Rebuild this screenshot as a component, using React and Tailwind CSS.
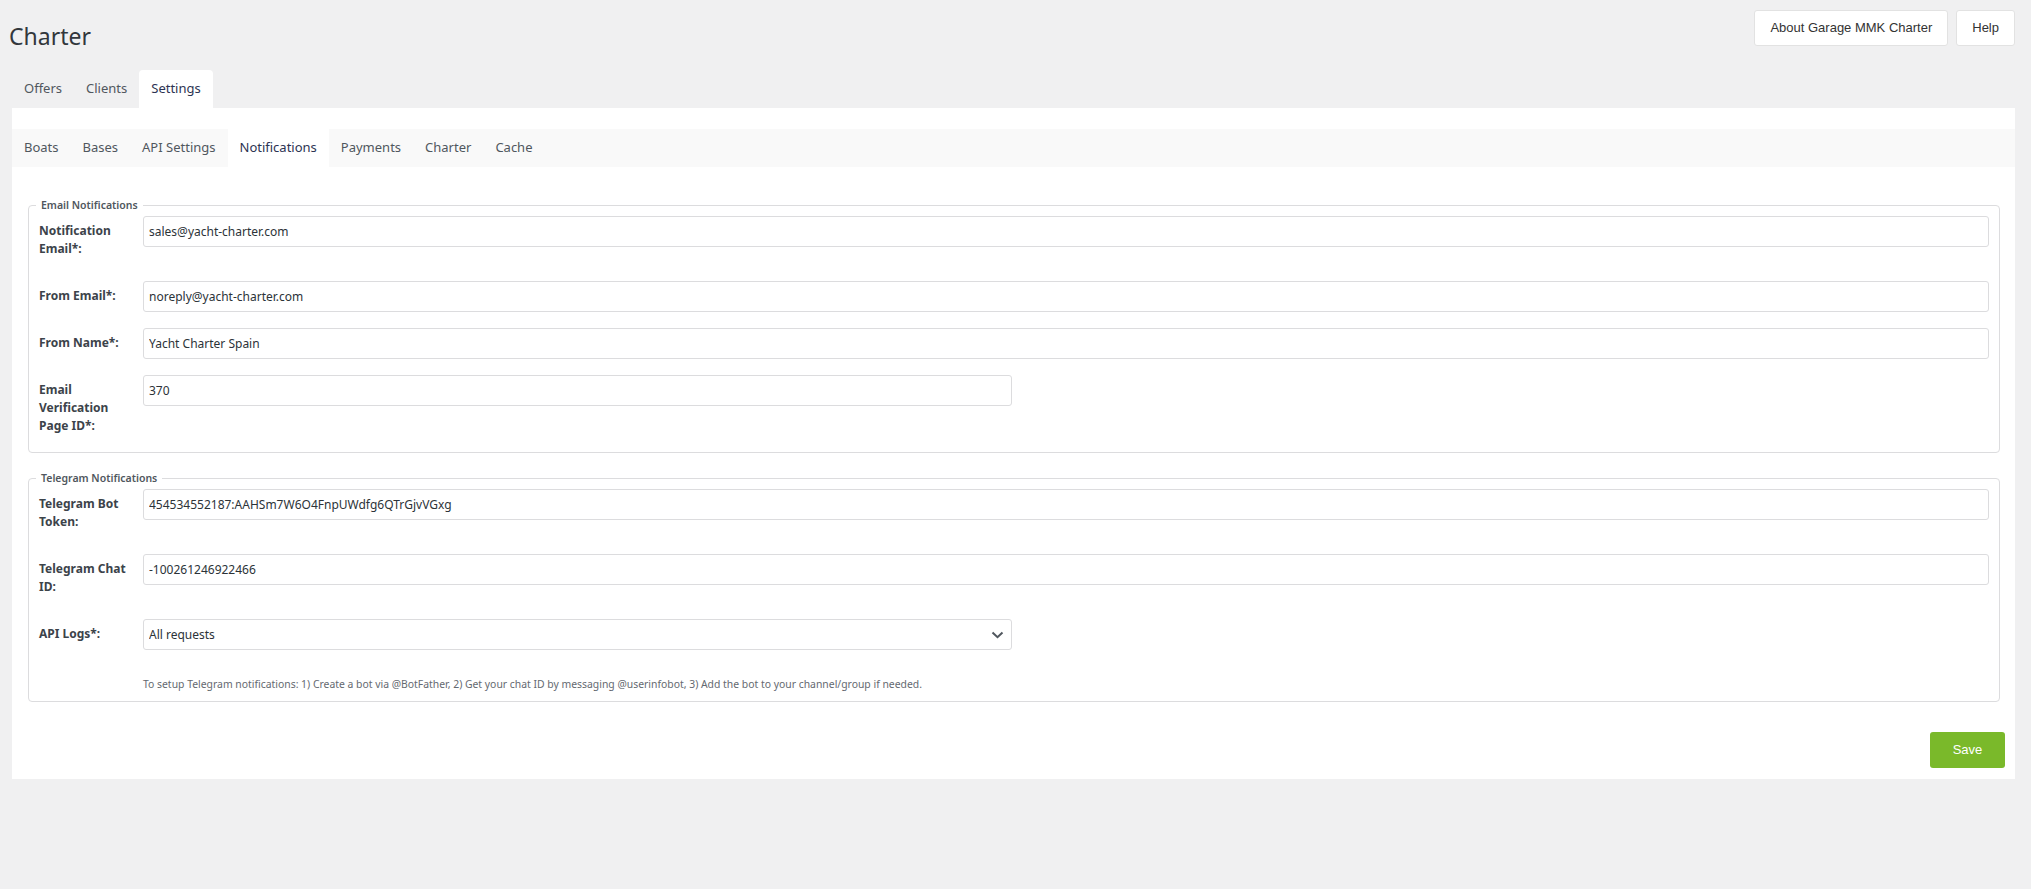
import React, { useState } from "react";

const mainTabs = ["Offers", "Clients", "Settings"];
const subTabs = ["Boats", "Bases", "API Settings", "Notifications", "Payments", "Charter", "Cache"];

const Field = ({ label, name, value, onChange, short }) => (
  <div className="flex items-start">
    <label
      htmlFor={name}
      className="w-[104px] shrink-0 pr-[8px] pt-[6px] pb-[7px] text-[12px] leading-[18px] font-bold text-[#3c434a]"
    >
      {label}
    </label>
    <input
      id={name}
      name={name}
      type="text"
      value={value}
      onChange={onChange}
      className={
        short
          ? "w-[869px] h-[31px] rounded-[3px] border border-[#dcdcde] bg-white px-[5px] text-[12px] text-[#2c3338] outline-none"
          : "flex-1 min-w-0 h-[31px] rounded-[3px] border border-[#dcdcde] bg-white px-[5px] text-[12px] text-[#2c3338] outline-none"
      }
    />
  </div>
);

const Section = ({ title, children, className }) => (
  <fieldset className={`rounded-[4px] border border-[#dcdcde] px-[7px] pb-[10px] ${className}`}>
    <legend className="px-[5px] text-[10.5px] leading-[14px] font-semibold text-[#50575e]">{title}</legend>
    <div className="flex flex-col gap-[16px] px-[3px] pt-[4px]">{children}</div>
  </fieldset>
);

const App = () => {
  const [tab, setTab] = useState("Settings");
  const [subTab, setSubTab] = useState("Notifications");
  const [form, setForm] = useState({
    notification_email: "sales@yacht-charter.com",
    from_email: "noreply@yacht-charter.com",
    from_name: "Yacht Charter Spain",
    verification_page: "370",
    bot_token: "454534552187:AAHSm7W6O4FnpUWdfg6QTrGjvVGxg",
    chat_id: "-100261246922466",
    api_logs: "all",
  });

  const handleChange = (e) => setForm({ ...form, [e.target.name]: e.target.value });

  return (
    <div className="min-h-screen bg-[#f0f0f1] pl-[12px] pr-[16px] pt-[10px] font-['Noto_Sans',sans-serif]">
      {/* header */}
      <div className="flex items-start justify-between">
        <h1 className="-ml-[3px] pt-[11px] text-[23px] leading-[30px] font-normal text-[#32373c]">Charter</h1>
        <div className="flex gap-[8px] font-['Liberation_Sans',Arial,sans-serif] text-[13px] text-[#333]">
          <button className="h-[36px] px-[15px] rounded-[3px] border border-[#e2e2e2] bg-white">About Garage MMK Charter</button>
          <button className="h-[36px] px-[15px] rounded-[3px] border border-[#e2e2e2] bg-white">Help</button>
        </div>
      </div>

      {/* main tabs */}
      <div className="mt-[19px] flex">
        {mainTabs.map((t) => (
          <button
            key={t}
            onClick={() => setTab(t)}
            className={
              t === tab
                ? "h-[38px] px-3 flex items-center rounded-t-[4px] bg-white text-[13px] text-[#2c3352]"
                : "h-[38px] px-3 flex items-center text-[13px] text-[#50575e]"
            }
          >
            {t}
          </button>
        ))}
      </div>

      {/* panel */}
      <div className="bg-white pt-[21px] pb-[11px]">
        <div className="flex bg-[#f9f9f9]">
          {subTabs.map((t) => (
            <button
              key={t}
              onClick={() => setSubTab(t)}
              className={
                t === subTab
                  ? "h-[38px] px-3 flex items-center bg-white text-[13px] text-[#2c3352]"
                  : "h-[38px] px-3 flex items-center text-[13px] text-[#50575e]"
              }
            >
              {t}
            </button>
          ))}
        </div>

        <div className="pl-[16px] pr-[15px]">
          <Section title="Email Notifications" className="mt-[31px]">
            <Field label="Notification Email*:" name="notification_email" value={form.notification_email} onChange={handleChange} />
            <Field label="From Email*:" name="from_email" value={form.from_email} onChange={handleChange} />
            <Field label="From Name*:" name="from_name" value={form.from_name} onChange={handleChange} />
            <Field label="Email Verification Page ID*:" name="verification_page" value={form.verification_page} onChange={handleChange} short />
          </Section>

          <Section title="Telegram Notifications" className="mt-[18px]">
            <Field label="Telegram Bot Token:" name="bot_token" value={form.bot_token} onChange={handleChange} />
            <Field label="Telegram Chat ID:" name="chat_id" value={form.chat_id} onChange={handleChange} />
            <div className="flex items-start">
              <label
                htmlFor="api_logs"
                className="w-[104px] shrink-0 pr-[8px] pt-[6px] pb-[7px] text-[12px] leading-[18px] font-bold text-[#3c434a]"
              >
                API Logs*:
              </label>
              <div className="relative w-[869px]">
                <select
                  id="api_logs"
                  name="api_logs"
                  value={form.api_logs}
                  onChange={handleChange}
                  className="w-full h-[31px] appearance-none rounded-[3px] border border-[#dcdcde] bg-white px-[5px] text-[12px] text-[#2c3338] outline-none"
                >
                  <option value="all">All requests</option>
                  <option value="errors">Errors only</option>
                  <option value="none">Disabled</option>
                </select>
                <svg
                  className="pointer-events-none absolute right-[8px] top-[12px]"
                  width="13"
                  height="8"
                  viewBox="0 0 13 8"
                  fill="none"
                >
                  <polyline points="1.5,1.5 6.5,6.2 11.5,1.5" stroke="#50575e" strokeWidth="2" />
                </svg>
              </div>
            </div>
            <p className="mt-[12px] pl-[104px] text-[10.4px] leading-[13px] text-[#646970]">
              To setup Telegram notifications: 1) Create a bot via @BotFather, 2) Get your chat ID by messaging @userinfobot, 3) Add the bot to your channel/group if needed.
            </p>
          </Section>
        </div>

        <div className="mt-[30px] flex justify-end pr-[10px]">
          <button className="h-[36px] w-[75px] rounded-[3px] bg-[#7ab92a] font-['Liberation_Sans',Arial,sans-serif] text-[13px] text-white">
            Save
          </button>
        </div>
      </div>
    </div>
  );
};

export default App;
